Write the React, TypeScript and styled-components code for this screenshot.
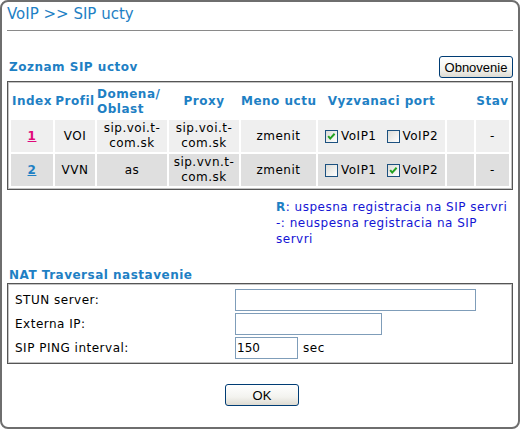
import styled, { createGlobalStyle } from 'styled-components';

const GlobalStyle = createGlobalStyle`
  html, body { margin: 0; padding: 0; background: #fff; }
  body {
    font-family: 'DejaVu Sans', Verdana, sans-serif;
    font-size: 12px;
    letter-spacing: 0.5px;
    color: #000;
  }
`;

const blue = '#1e80c4';

const Frame = styled.div`
  box-sizing: border-box;
  width: 520px;
  height: 429px;
  border: 2px solid #6e6e6e;
  border-radius: 8px;
  padding: 0 5px;
`;

const Title = styled.h1`
  margin: 0;
  padding: 2px 0 6px 0;
  border-bottom: 1px solid #8a8a8a;
  font-size: 15px;
  line-height: 20px;
  font-weight: normal;
  letter-spacing: 0;
  color: ${blue};
`;

const SectionRow = styled.div`
  display: flex;
  justify-content: space-between;
  align-items: center;
  margin-top: 25px;
  height: 22px;
`;

const Heading = styled.div<{ $top?: number }>`
  padding-left: 2px;
  margin-top: ${(p) => p.$top ?? 0}px;
  font-weight: bold;
  line-height: 16px;
  color: ${blue};
`;

const XpButton = styled.button`
  box-sizing: border-box;
  width: 74px;
  height: 22px;
  padding: 0;
  border: 1px solid #003c74;
  border-radius: 3px;
  background: linear-gradient(#ffffff, #f3f3ef 60%, #dedbd2);
  font-family: 'Liberation Sans', Arial, sans-serif;
  font-size: 13px;
  letter-spacing: 0;
  color: #000;
`;

const Panel = styled.div<{ $top: number }>`
  box-sizing: border-box;
  margin-top: ${(p) => p.$top}px;
  border: 1px solid #555;
  box-shadow: inset 0 0 0 1px #c4c4c4;
  padding: 1px;
`;

const AccountTable = styled.table`
  width: 100%;
  table-layout: fixed;
  border-collapse: separate;
  border-spacing: 2px;
`;

const HeadCell = styled.th`
  height: 33px;
  padding: 0;
  font-weight: bold;
  line-height: 15px;
  color: ${blue};
  text-align: center;
  white-space: nowrap;
  overflow: visible;
`;

const Row = styled.tr<{ $shade: string }>`
  background: ${(p) => p.$shade};
`;

const Cell = styled.td`
  height: 32px;
  padding: 0;
  line-height: 15px;
  text-align: center;
`;

const IndexLink = styled.a<{ $color: string }>`
  color: ${(p) => p.$color};
  font-weight: bold;
  text-decoration: underline;
`;

const PortWrap = styled.div`
  display: flex;
  align-items: center;
  justify-content: center;
  gap: 3px;
`;

const PortLabel = styled.span`
  margin-right: 7px;
  &:last-child { margin-right: 0; }
`;

const Box = styled.span`
  display: inline-flex;
  box-sizing: border-box;
  width: 13px;
  height: 13px;
  border: 1px solid #1c5180;
  background: linear-gradient(135deg, #dcdcd7, #ffffff);
`;

const Legend = styled.div`
  display: flex;
  justify-content: flex-end;
  margin-top: 9px;
`;

const LegendText = styled.div`
  width: 237px;
  line-height: 16px;
  color: #1414d4;
`;

const LegendKey = styled.b`
  color: ${blue};
`;

const NatGrid = styled.div`
  display: grid;
  grid-template-columns: 220px 1fr;
  row-gap: 2px;
  align-items: center;
  padding: 4px 6px 3px 6px;
`;

const FieldLine = styled.div`
  display: flex;
  align-items: center;
  gap: 5px;
`;

const TextInput = styled.input<{ $w: number }>`
  box-sizing: border-box;
  width: ${(p) => p.$w}px;
  height: 22px;
  margin: 0;
  padding: 0 1px;
  border: 1px solid #7f9db9;
  font-family: 'DejaVu Sans', Verdana, sans-serif;
  font-size: 12px;
  letter-spacing: 0;
  color: #000;
  outline: none;
`;

const Footer = styled.div`
  display: flex;
  justify-content: center;
  padding-left: 4px;
  margin-top: 20px;
`;

function Checkbox({ checked }: { checked?: boolean }) {
  return (
    <Box>
      {checked && (
        <svg width="11" height="11" viewBox="0 0 11 11">
          <path d="M2.2 5.2 L4.2 7.6 L8.6 2.8" fill="none" stroke="#21a121" strokeWidth="2" />
        </svg>
      )}
    </Box>
  );
}

const accounts = [
  { id: 1, profile: 'VOI', domain: 'sip.voi.t-com.sk', proxy: 'sip.voi.t-com.sk', p1: true, p2: false, color: '#e0087a', shade: '#efefef' },
  { id: 2, profile: 'VVN', domain: 'as', proxy: 'sip.vvn.t-com.sk', p1: false, p2: true, color: blue, shade: '#dfdfdf' },
];

export default function App() {
  return (
    <>
      <GlobalStyle />
      <Frame>
        <Title>VoIP &gt;&gt; SIP ucty</Title>

        <SectionRow>
          <Heading>Zoznam SIP uctov</Heading>
          <XpButton>Obnovenie</XpButton>
        </SectionRow>

        <Panel $top={3}>
          <AccountTable>
            <colgroup>
              <col style={{ width: 42 }} />
              <col style={{ width: 40 }} />
              <col style={{ width: 70 }} />
              <col style={{ width: 70 }} />
              <col style={{ width: 75 }} />
              <col style={{ width: 127 }} />
              <col style={{ width: 27 }} />
              <col />
            </colgroup>
            <thead>
              <tr>
                <HeadCell>Index</HeadCell>
                <HeadCell>Profil</HeadCell>
                <HeadCell style={{ textAlign: 'left' }}>
                  Domena/
                  <br />
                  Oblast
                </HeadCell>
                <HeadCell>Proxy</HeadCell>
                <HeadCell>Meno uctu</HeadCell>
                <HeadCell>Vyzvanaci port</HeadCell>
                <HeadCell />
                <HeadCell>Stav</HeadCell>
              </tr>
            </thead>
            <tbody>
              {accounts.map((a) => (
                <Row key={a.id} $shade={a.shade}>
                  <Cell>
                    <IndexLink $color={a.color}>{a.id}</IndexLink>
                  </Cell>
                  <Cell>{a.profile}</Cell>
                  <Cell>{a.domain}</Cell>
                  <Cell>{a.proxy}</Cell>
                  <Cell>zmenit</Cell>
                  <Cell>
                    <PortWrap>
                      <Checkbox checked={a.p1} />
                      <PortLabel>VoIP1</PortLabel>
                      <Checkbox checked={a.p2} />
                      <PortLabel>VoIP2</PortLabel>
                    </PortWrap>
                  </Cell>
                  <Cell />
                  <Cell>-</Cell>
                </Row>
              ))}
            </tbody>
          </AccountTable>
        </Panel>

        <Legend>
          <LegendText>
            <LegendKey>R</LegendKey>: uspesna registracia na SIP servri
            <br />
            -: neuspesna registracia na SIP servri
          </LegendText>
        </Legend>

        <Heading $top={20}>NAT Traversal nastavenie</Heading>

        <Panel $top={0}>
          <NatGrid>
            <span>STUN server:</span>
            <TextInput $w={241} />
            <span>Externa IP:</span>
            <TextInput $w={147} />
            <span>SIP PING interval:</span>
            <FieldLine>
              <TextInput $w={63} defaultValue="150" />
              <span>sec</span>
            </FieldLine>
          </NatGrid>
        </Panel>

        <Footer>
          <XpButton>OK</XpButton>
        </Footer>
      </Frame>
    </>
  );
}
